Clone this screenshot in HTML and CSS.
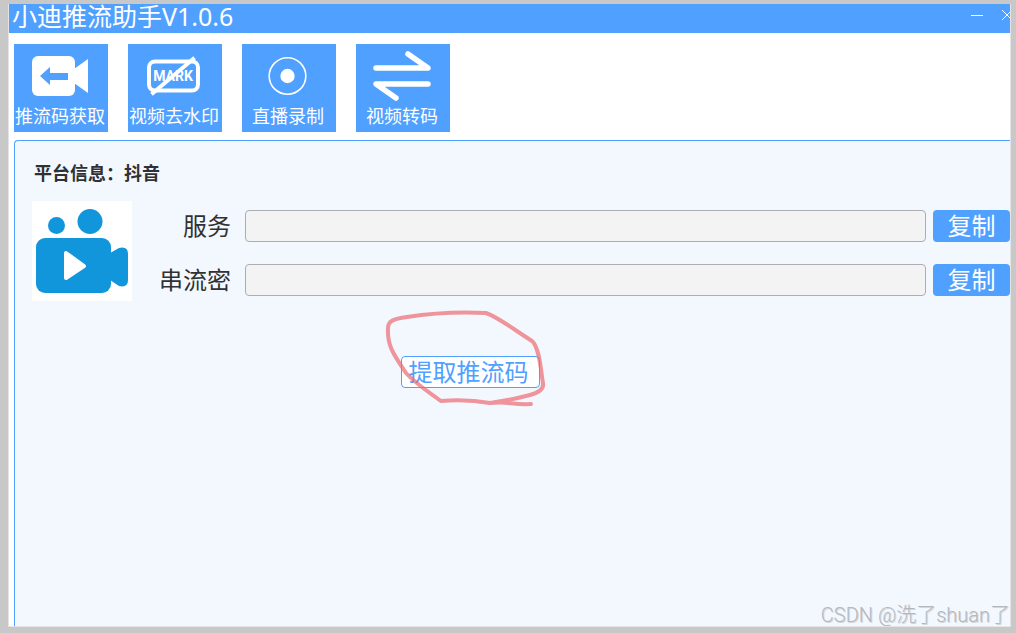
FILE: index.html
```html
<!DOCTYPE html>
<html lang="zh-CN">
<head>
    <meta charset="UTF-8">
    <meta name="viewport" content="width=device-width, initial-scale=1.0">
    <title>小迪推流助手V1.0.6</title>
    <link rel="stylesheet" href="styles.css">
</head>
<body>
    <div class="window">
        <header class="title-bar">
            <h1 class="title">小迪推流助手V1.0.6</h1>
            <div class="window-buttons">
                <button type="button" class="window-button" aria-label="最小化">
                    <svg width="14" height="14" viewBox="0 0 14 14"><path d="M1 7.5h12" /></svg>
                </button>
                <button type="button" class="window-button" aria-label="关闭">
                    <svg width="14" height="14" viewBox="0 0 14 14"><path d="M2 2l10 10M12 2L2 12" /></svg>
                </button>
            </div>
        </header>

        <nav class="toolbar">
            <button type="button" class="tool">
                <svg class="tool-icon" width="94" height="62" viewBox="0 0 94 62">
                    <rect x="19" y="12" width="43" height="40" rx="6" fill="#fff" />
                    <path d="M61 25l14-10v34L61 39z" fill="#fff" />
                    <path d="M27 32l10-9v6h18v7H37v5z" fill="#50a0ff" />
                </svg>
                <span>推流码获取</span>
            </button>
            <button type="button" class="tool">
                <svg class="tool-icon" width="94" height="62" viewBox="0 0 94 62">
                    <rect x="22" y="17.5" width="49" height="29" rx="6" fill="none" stroke="#fff" stroke-width="4" />
                    <text class="mark" x="46" y="37" text-anchor="middle">MARK</text>
                    <path d="M26 49L66 15" stroke="#fff" stroke-width="4" stroke-linecap="square" />
                </svg>
                <span>视频去水印</span>
            </button>
            <button type="button" class="tool">
                <svg class="tool-icon" width="94" height="62" viewBox="0 0 94 62">
                    <circle cx="46.5" cy="32" r="18.3" fill="none" stroke="#fff" stroke-width="1.6" />
                    <circle cx="46.5" cy="32" r="7.2" fill="#fff" />
                </svg>
                <span>直播录制</span>
            </button>
            <button type="button" class="tool">
                <svg class="tool-icon" width="94" height="62" viewBox="0 0 94 62">
                    <path d="M21 24h52L53 10M73 40H21l20 14" fill="none" stroke="#fff" stroke-width="5.5" stroke-linecap="round" stroke-linejoin="round" />
                </svg>
                <span>视频转码</span>
            </button>
        </nav>

        <main class="panel">
            <h2 class="platform">平台信息：抖音</h2>
            <div class="stream-info">
                <svg class="camera" width="100" height="100" viewBox="0 0 100 100">
                    <rect width="100" height="100" fill="#fff" />
                    <g fill="#1296db">
                        <circle cx="24.5" cy="24.5" r="8.5" />
                        <circle cx="58" cy="20.5" r="12.5" />
                        <rect x="4" y="37" width="75" height="55" rx="9" />
                        <path d="M78 52l9-5q9-2 9 6v26q0 8-9 6l-9-6z" />
                    </g>
                    <path d="M34 52v25l18-12z" fill="#fff" stroke="#fff" stroke-width="4" stroke-linejoin="round" />
                </svg>
                <div class="fields">
                    <div class="field">
                        <label for="server">服务</label>
                        <input type="text" id="server" readonly>
                        <button type="button" class="copy">复制</button>
                    </div>
                    <div class="field">
                        <label for="streamKey">串流密</label>
                        <input type="text" id="streamKey" readonly>
                        <button type="button" class="copy">复制</button>
                    </div>
                </div>
            </div>
            <div class="action">
                <button type="button" class="extract">提取推流码</button>
                <!-- Hand-drawn ring around the button -->
                <svg class="scribble" width="166" height="104" viewBox="0 0 166 104">
                    <path d="M23 64C11 46 4 37 5 19C5 12 10 10 24 8Q62 2 103 4C115 8 130 20 149 32C157 39 158 64 160 74C161 80 155 84 147 86Q128 91 107 94C126 92 128 96 148 95M107 94Q84 90 58 92C46 83 34 76 23 64" />
                </svg>
            </div>
        </main>
        <div class="watermark">CSDN @洗了shuan了</div>
    </div>
</body>
</html>
```
FILE: styles.css
```css
* {
    box-sizing: border-box;
}
body {
    margin: 0;
    height: 100vh;
    padding: 4px 5px 6px 8px;
    background: #c8c8c8;
    color: #303133;
    font-family: "Noto Sans", "Noto Sans CJK SC", sans-serif;
}
button {
    padding: 0;
    border: none;
    background: #50a0ff;
    color: white;
    font-family: inherit;
    cursor: pointer;
}
.window {
    position: relative;
    display: flex;
    flex-direction: column;
    height: 100%;
    overflow: hidden;
    background: white;
    border: 1px solid #e4e4e4;
    border-top: none;
}
.title-bar {
    display: flex;
    justify-content: space-between;
    height: 29px;
    padding-left: 3px;
    background: #50a0ff;
    color: white;
}
.title {
    margin: 0;
    font-size: 25px;
    font-weight: 400;
    line-height: 24px;
}
.window-buttons {
    display: flex;
    gap: 16px;
    height: 22px;
    margin-right: -4px;
}
.window-button {
    display: flex;
    align-items: center;
}
.window-button path {
    fill: none;
    stroke: white;
}
.toolbar {
    display: flex;
    gap: 20px;
    padding: 11px 5px 8px;
}
.tool {
    display: flex;
    flex-direction: column;
    align-items: center;
    width: 94px;
    height: 88px;
    padding-right: 2px;
    font-size: 18px;
    line-height: 20px;
    white-space: nowrap;
}
.tool-icon {
    flex: none;
}
.mark {
    fill: white;
    font: bold 14px Roboto, sans-serif;
}
.panel {
    flex: 1;
    padding: 20px 0 0 17px;
    background: #f3f8ff;
    border: 1px solid #50a0ff;
    border-width: 1px 0 0 1px;
    border-top-left-radius: 4px;
    margin-left: 5px;
}
.platform {
    margin: 0 2px 16px;
    font-size: 18px;
    line-height: 24px;
}
.stream-info {
    display: flex;
}
.camera {
    flex: none;
}
.fields {
    flex: 1;
    display: flex;
    flex-direction: column;
    gap: 22px;
    padding-top: 9px;
}
.field {
    display: flex;
    height: 32px;
    font-size: 24px;
    line-height: 32px;
}
.field label {
    width: 99px;
    margin-right: 14px;
    text-align: right;
}
.field input {
    flex: 1;
    min-width: 0;
    background: #f3f3f3;
    border: 1px solid #abadb3;
    border-radius: 4px;
    font: inherit;
}
.copy {
    width: 77px;
    margin-left: 7px;
    border-radius: 4px;
    font-size: 24px;
    line-height: 32px;
}
.action {
    position: relative;
    width: 139px;
    margin: 55px 0 0 369px;
}
.extract {
    display: block;
    width: 100%;
    height: 32px;
    padding-right: 4px;
    background: white;
    border: 1px solid #50a0ff;
    border-radius: 4px;
    color: #50a0ff;
    font-size: 24px;
    line-height: 30px;
}
.scribble {
    position: absolute;
    top: -47px;
    left: -18px;
    pointer-events: none;
}
.scribble path {
    fill: none;
    stroke: #ec6a70;
    stroke-width: 4;
    stroke-linecap: round;
    stroke-linejoin: round;
    opacity: 0.7;
}
.watermark {
    position: absolute;
    right: 0;
    bottom: 0;
    color: #b4b7bc;
    font-family: Roboto, "Noto Sans CJK SC", sans-serif;
    font-size: 20px;
    font-weight: 300;
    line-height: 22px;
    text-shadow: 1px 1px #d4d6d9;
    white-space: nowrap;
}
```
